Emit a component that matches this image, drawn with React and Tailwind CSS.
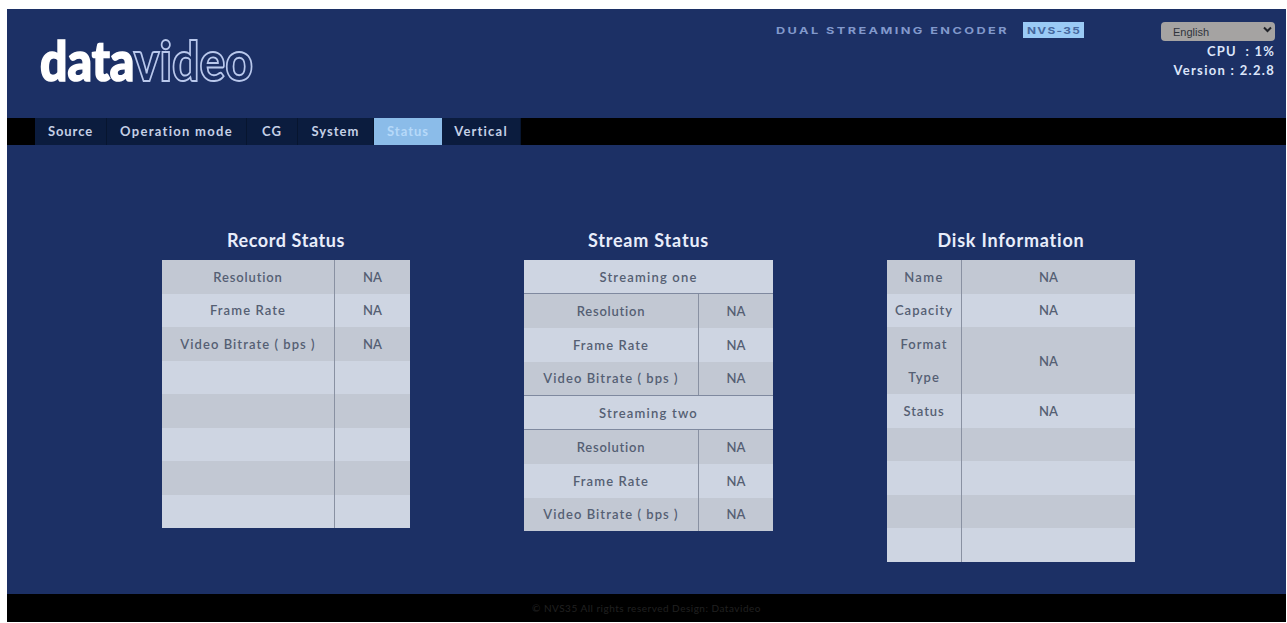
import React from "react";

const LIGHT = "bg-[#ced5e2]";
const DARK = "bg-[#c2c8d3]";

const navItems = [
  { label: "Source", box: "w-[72px]", track: "tracking-[0.9px]" },
  { label: "Operation mode", box: "w-[140px]", track: "tracking-[1.3px]" },
  { label: "CG", box: "w-[51px]", track: "tracking-[1.2px]" },
  { label: "System", box: "w-[76px]", track: "tracking-[1px]" },
  { label: "Status", box: "w-[68px]", track: "tracking-[1px]", active: true },
  { label: "Vertical", box: "w-[79px]", track: "tracking-[1.2px]" },
];

function Title({ children, className }) {
  return (
    <h2 className={`flex h-[30px] items-center justify-center whitespace-nowrap text-[18px] font-bold leading-none text-[#e8edfb] ${className}`}>
      {children}
    </h2>
  );
}

function Cell({ children, className = "" }) {
  return (
    <div className={`flex items-center justify-center whitespace-nowrap pt-px leading-none ${className}`}>{children}</div>
  );
}

function Row({ label, value, shade, track = "", first = "w-[173px]", height = "h-[33.5px]" }) {
  return (
    <div className={`flex ${height} ${shade}`}>
      <Cell className={`${first} shrink-0 border-r border-[#8991a2] ${track}`}>{label}</Cell>
      <Cell className="flex-1">{value}</Cell>
    </div>
  );
}

function StreamGroup({ name }) {
  return (
    <>
      <Cell className={`h-[34px] border-b border-[#7f899f] tracking-[1.2px] ${LIGHT}`}>{name}</Cell>
      <Row label="Resolution" value="NA" shade={DARK} track="tracking-[0.75px]" first="w-[175px]" height="h-[34px]" />
      <Row label="Frame Rate" value="NA" shade={LIGHT} track="tracking-[1.1px]" first="w-[175px]" height="h-[33.5px]" />
      <Row label="Video Bitrate ( bps )" value="NA" shade={DARK} track="tracking-[1.05px]" first="w-[175px]" height="h-[33.5px]" />
    </>
  );
}

export default function App() {
  return (
    <div className="h-[623px] w-[1287px] overflow-hidden bg-white pl-[7px] pt-[9px] font-['Lato',sans-serif]">
      <div className="flex h-[613px] w-[1279px] flex-col bg-[#1c3065]">
        <header className="flex h-[109px] shrink-0">
          <svg className="ml-[23px] mt-[8px] h-[90px] w-[240px] shrink-0" viewBox="-6 -14 240 90" aria-label="datavideo">
            <text x="4" y="49.5" fontSize="55" fontWeight="900" fontFamily="Lato, sans-serif" textLength="213" lengthAdjust="spacingAndGlyphs">
              <tspan fill="#fff" stroke="#fff" strokeWidth="1.6">data</tspan><tspan fill="#1c3065" stroke="#b9c8ec" strokeWidth="1.9">video</tspan>
            </text>
          </svg>
          <div className="ml-[499px] mt-[13px] flex h-4 w-[316px] items-center">
            <svg className="h-4 w-[240px] shrink-0" viewBox="0 0 240 16">
              <text x="7" y="12" fontSize="9.5" fontWeight="bold" fill="#8299cc" fontFamily="Inter, sans-serif" letterSpacing="1.8" textLength="233" lengthAdjust="spacingAndGlyphs">DUAL STREAMING ENCODER</text>
            </svg>
            <svg className="ml-[14px] h-4 w-[61px] shrink-0 bg-[#9acaf5]" viewBox="0 0 61 16">
              <text x="4" y="12" fontSize="9.5" fontWeight="bold" fill="#45679e" fontFamily="Inter, sans-serif" letterSpacing="1" textLength="54" lengthAdjust="spacingAndGlyphs">NVS-35</text>
            </svg>
          </div>
          <div className="ml-auto mr-[11px] mt-[13px] flex w-[118px] flex-col items-end whitespace-nowrap text-[13px] font-bold leading-none text-[#dce5fa]">
            <div className="flex h-[19px] w-[114px] items-center justify-between rounded-sm bg-[#a5a3a2] pl-[12px] pr-[3px] font-['Liberation_Sans',sans-serif] text-[11px] font-normal text-[#30343c]">
              <span className="pt-px">English</span>
              <svg className="mb-1 h-[7px] w-[9px]" viewBox="0 0 9 7" fill="none" stroke="#202329" strokeWidth="2"><path d="M1 1.5 4.5 5 8 1.5" /></svg>
            </div>
            <div className="mt-[2px] flex h-[16px] items-center whitespace-pre tracking-[1.2px]">CPU  : 1%</div>
            <div className="mt-[2px] flex h-[18px] items-center tracking-[1.3px]">Version : 2.2.8</div>
          </div>
        </header>
        <nav className="flex h-[27px] shrink-0 bg-black pl-[28px]">
          {navItems.map((item) => (
            <div
              key={item.label}
              className={`flex items-center justify-center whitespace-nowrap text-[13px] font-bold leading-none ${item.box} ${item.track} ${
                item.active ? "bg-[#8bbce9] text-[#b6d9f9]" : "border-r border-[#07152f] bg-[#0b1c3e] text-[#c5d0e6]"
              }`}
            >
              {item.label}
            </div>
          ))}
        </nav>
        <main className="flex flex-1 items-start pl-[155px] pt-[80px] text-[13px] font-semibold text-[#555f73]">
          <section className="w-[248px]">
            <Title className="tracking-[0.6px]">Record Status</Title>
            <div className="mt-[5px]">
              <Row label="Resolution" value="NA" shade={DARK} track="tracking-[0.85px]" />
              <Row label="Frame Rate" value="NA" shade={LIGHT} track="tracking-[1.1px]" />
              <Row label="Video Bitrate ( bps )" value="NA" shade={DARK} track="tracking-[1.05px]" />
              <Row shade={LIGHT} />
              <Row shade={DARK} />
              <Row shade={LIGHT} />
              <Row shade={DARK} />
              <Row shade={LIGHT} />
            </div>
          </section>
          <section className="ml-[114px] w-[249px]">
            <Title className="tracking-[0.8px]">Stream Status</Title>
            <div className="mt-[5px]">
              <StreamGroup name="Streaming one" />
              <div className="border-t border-[#7f899f]">
                <StreamGroup name="Streaming two" />
              </div>
            </div>
          </section>
          <section className="ml-[114px] w-[248px]">
            <Title className="tracking-[0.8px]">Disk Information</Title>
            <div className="mt-[5px]">
              <Row label="Name" value="NA" shade={DARK} first="w-[75px]" track="tracking-[1.4px]" />
              <Row label="Capacity" value="NA" shade={LIGHT} first="w-[75px]" track="tracking-[1px]" />
              <Row
                label={<span className="flex flex-col text-center leading-[33.5px]"><span>Format</span><span>Type</span></span>}
                value="NA"
                shade={DARK}
                first="w-[75px]"
                track="tracking-[1px]"
                height="h-[67px]"
              />
              <Row label="Status" value="NA" shade={LIGHT} first="w-[75px]" track="tracking-[0.9px]" />
              <Row shade={DARK} first="w-[75px]" />
              <Row shade={LIGHT} first="w-[75px]" />
              <Row shade={DARK} first="w-[75px]" />
              <Row shade={LIGHT} first="w-[75px]" />
            </div>
          </section>
        </main>
        <footer className="flex h-[28px] shrink-0 items-center justify-center bg-black text-[10px] leading-none tracking-[0.5px] text-[#202020]">
          © NVS35 All rights reserved Design: Datavideo
        </footer>
      </div>
    </div>
  );
}
